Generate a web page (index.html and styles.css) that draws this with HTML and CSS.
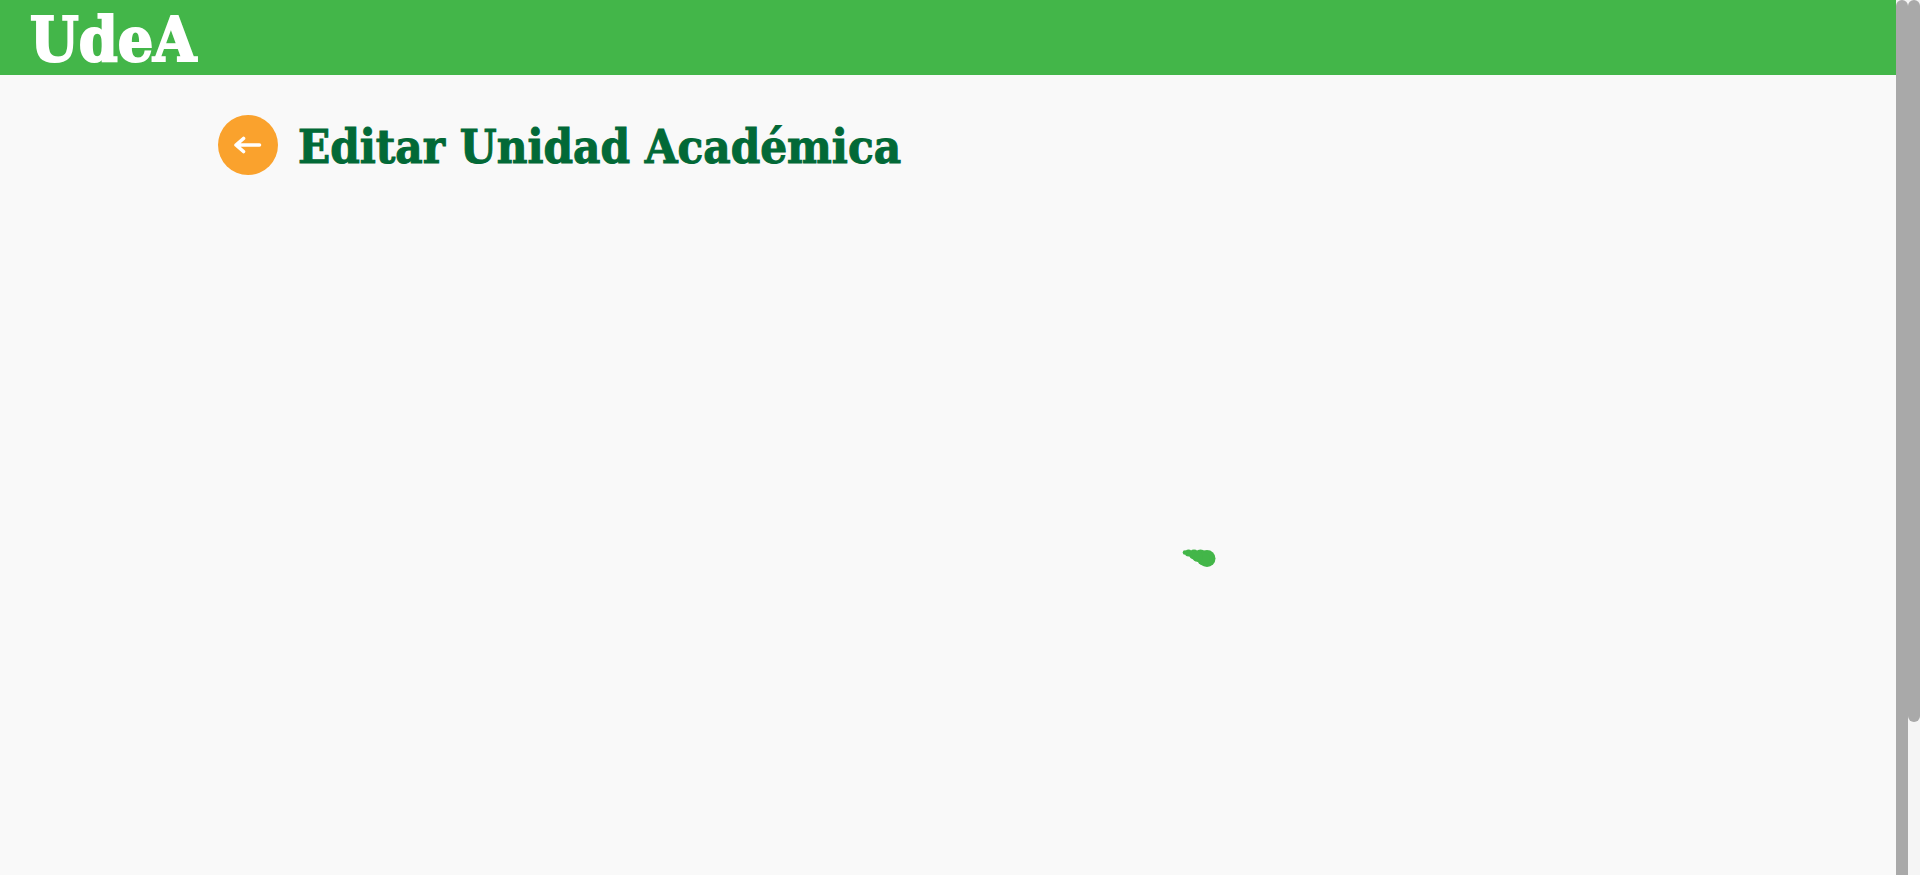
FILE: index.html
```html
<!DOCTYPE html>
<html lang="es">
<head>
<meta charset="utf-8">
<title>Editar Unidad Académica</title>
<link rel="stylesheet" href="styles.css">
</head>
<body>
<div class="page">
  <header class="topbar"><a class="brand" href="#">UdeA</a></header>
  <main class="content">
    <div class="heading">
      <button class="back" type="button" aria-label="Volver">
        <svg width="60" height="60" viewBox="0 0 60 60" fill="none" stroke="#fff" stroke-width="3.6" stroke-linecap="round" stroke-linejoin="round" aria-hidden="true"><path d="M18 30H41.5M25.500 23.500L18 30L25.500 36.500"/></svg>
      </button>
      <h1 class="title">Editar Unidad Académica</h1>
    </div>
  </main>
</div>
<div class="spinner" role="status" aria-label="Cargando">
  <svg width="36" height="22" viewBox="0 0 36 22" fill="#43b649" aria-hidden="true">
    <circle cx="25" cy="11.500" r="8.500"/><circle cx="18.500" cy="9" r="6.500"/><circle cx="21.500" cy="12" r="6.500"/><circle cx="12" cy="7.500" r="5"/><circle cx="15.500" cy="9.500" r="5.300"/><circle cx="6.500" cy="6" r="3.500"/><circle cx="3" cy="5.500" r="2.300"/>
  </svg>
</div>
<div class="scrollbars" aria-hidden="true">
  <div class="thumb thumb-inner"></div>
  <div class="thumb thumb-outer"></div>
</div>
</body>
</html>
```
FILE: styles.css
```css
* {
  box-sizing: border-box;
}

body {
  display: flex;
  min-height: 100vh;
  margin: 0;
  background: #f9f9f9;
  font-family: "Roboto Slab", "DejaVu Serif Condensed", "DejaVu Serif", serif;
}

.page {
  flex: 1;
  min-width: 0;
}

.topbar {
  display: flex;
  align-items: center;
  height: 75px;
  padding: 4px 30px 0;
  background: #43b649;
}

.brand {
  color: #fff;
  font-size: 62px;
  font-weight: 700;
  line-height: 75px;
  text-decoration: none;
  -webkit-text-stroke: 2px #fff;
}

.content {
  max-width: 1460px;
  margin: 0 auto;
  padding-top: 40px;
}

.heading {
  display: flex;
  align-items: center;
  gap: 20px;
}

.back {
  flex: none;
  width: 60px;
  height: 60px;
  padding: 0;
  border: 0;
  border-radius: 50%;
  background: #faa22d;
  cursor: pointer;
}

.back svg {
  display: block;
}

.title {
  margin: 0;
  padding-top: 4px;
  color: #026937;
  font-size: 47px;
  font-weight: 700;
  line-height: 56px;
  -webkit-text-stroke: 1px #026937;
}

.spinner {
  position: fixed;
  top: 547px;
  left: 1182px;
}

.scrollbars {
  display: flex;
  width: 24px;
  height: 100vh;
  background: #f5f5f5;
}

.thumb {
  width: 12px;
  background: #a9a9a9;
}

.thumb-inner {
  height: 100%;
  border-radius: 6px 6px 0 0;
}

.thumb-outer {
  height: 722px;
  border-radius: 6px;
}
```
